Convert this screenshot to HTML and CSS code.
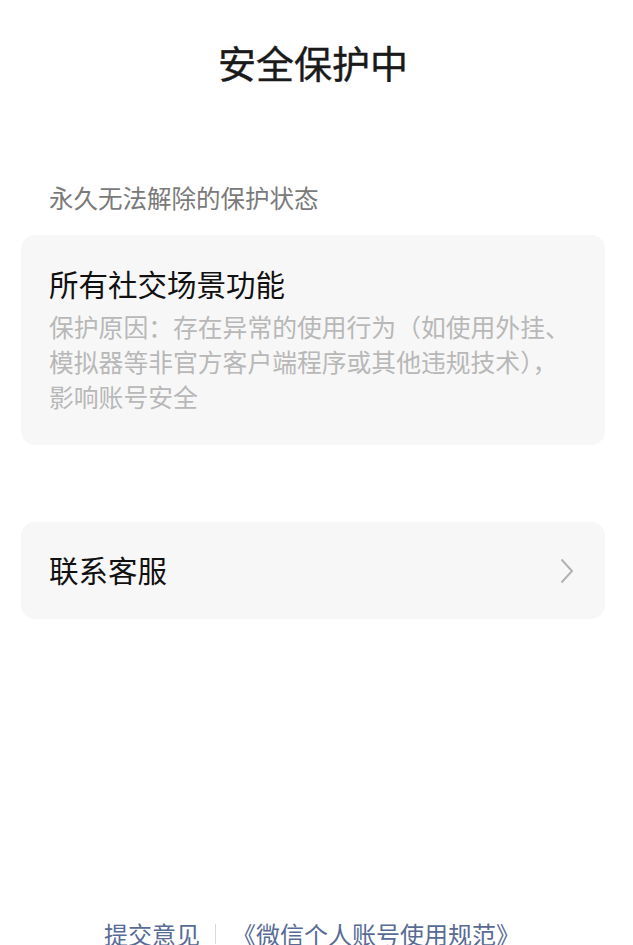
FILE: index.html
```html
<!DOCTYPE html>
<html lang="zh-CN">
<head>
<meta charset="utf-8">
<title>安全保护中</title>
<link rel="stylesheet" href="styles.css">
</head>
<body>
<div class="page">
  <h1 class="title">安全保护中</h1>
  <div class="section-label">永久无法解除的保护状态</div>
  <div class="card info">
    <div class="card-title">所有社交场景功能</div>
    <div class="reason">保护原因：存在异常的使用行为（如使用外挂、模拟器等非官方客户端程序或其他违规技术），影响账号安全</div>
  </div>
  <div class="card row">
    <span class="row-label">联系客服</span>
    <svg class="chevron" width="14" height="26" viewBox="0 0 14 26"><polyline points="1.5,1.5 12,13 1.5,24.5" fill="none" stroke="#b2b2b2" stroke-width="2"/></svg>
  </div>
  <div class="footer">
    <span class="link">提交意见</span>
    <span class="sep"></span>
    <span class="link">《微信个人账号使用规范》</span>
  </div>
</div>
</body>
</html>
```
FILE: styles.css
```css
html, body {
  margin: 0;
  padding: 0;
  background: #ffffff;
}
body {
  font-family: "Noto Sans CJK SC", "Noto Sans", sans-serif;
  color: #1a1a1a;
}
.page {
  padding: 0 28px 0 21px;
  display: flex;
  flex-direction: column;
}
.title {
  margin: 35px 0 0;
  font-size: 38px;
  line-height: 54px;
  font-weight: 400;
  text-align: center;
  color: #1a1a1a;
  -webkit-text-stroke: 0.4px #1a1a1a;
}
.section-label {
  margin-top: 92px;
  padding-left: 28px;
  font-size: 24.5px;
  line-height: 34px;
  color: #7a7a7a;
}
.card {
  background: #f7f7f7;
  border-radius: 14px;
  width: 584px;
  box-sizing: border-box;
}
.info {
  margin-top: 20px;
  padding: 28px 28px 31px 28px;
}
.card-title {
  font-size: 29.5px;
  line-height: 40px;
  color: #111111;
}
.reason {
  margin-top: 6px;
  font-size: 24.8px;
  line-height: 35px;
  color: #b8b8b8;
}
.row {
  margin-top: 77px;
  height: 97px;
  padding: 0 31px 0 28px;
  display: flex;
  align-items: center;
  justify-content: space-between;
}
.row-label {
  font-size: 29.5px;
  line-height: 40px;
  color: #111111;
  margin-top: -4px;
}
.chevron {
  display: block;
}
.footer {
  margin-top: 298px;
  display: flex;
  align-items: center;
  padding-left: 83px;
  font-size: 24px;
  line-height: 34px;
}
.link {
  color: #576b95;
}
.sep {
  width: 1px;
  height: 20px;
  background: #d9d9d9;
  margin: 0 16px 0 15px;
}
```
